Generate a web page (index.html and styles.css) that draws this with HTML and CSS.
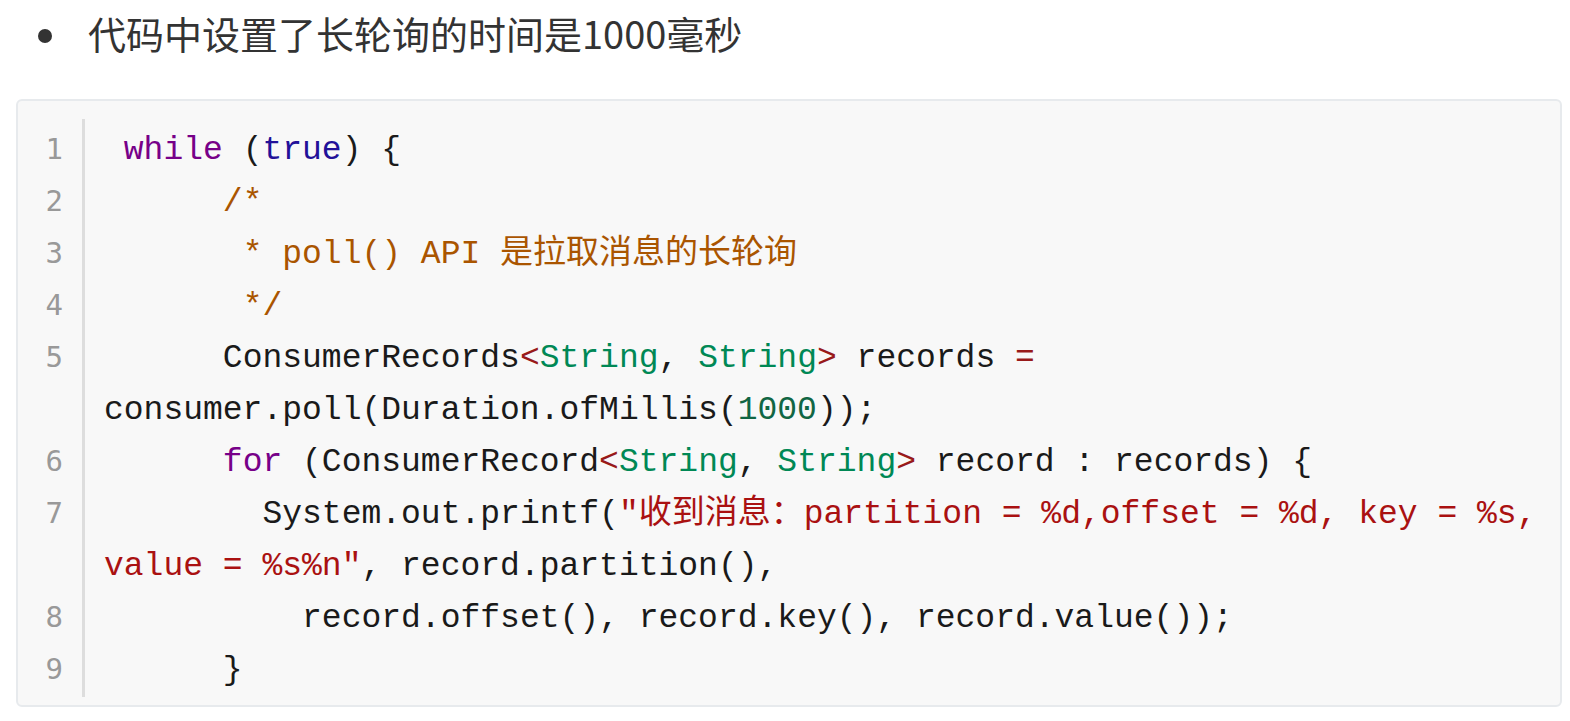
FILE: index.html
```html
<!DOCTYPE html>
<html lang="zh-CN">
<head>
<meta charset="utf-8">
<title>长轮询</title>
<link rel="stylesheet" href="styles.css">
</head>
<body>
<ul class="list">
  <li class="item">代码中设置了长轮询的时间是1000毫秒</li>
</ul>
<div class="code">
  <div class="rows">
    <div class="row"><span class="ln">1</span><span class="src"> <span class="kw">while</span> (<span class="atom">true</span>) {</span></div>
    <div class="row"><span class="ln">2</span><span class="src">      <span class="cm">/*</span></span></div>
    <div class="row"><span class="ln">3</span><span class="src">       <span class="cm">* poll() API 是拉取消息的长轮询</span></span></div>
    <div class="row"><span class="ln">4</span><span class="src">       <span class="cm">*/</span></span></div>
    <div class="row"><span class="ln">5</span><span class="src">      ConsumerRecords<span class="op">&lt;</span><span class="ty">String</span>, <span class="ty">String</span><span class="op">&gt;</span> records <span class="op">=</span> consumer.poll(Duration.ofMillis(<span class="num">1000</span>));</span></div>
    <div class="row"><span class="ln">6</span><span class="src">      <span class="kw">for</span> (ConsumerRecord<span class="op">&lt;</span><span class="ty">String</span>, <span class="ty">String</span><span class="op">&gt;</span> record : records) {</span></div>
    <div class="row"><span class="ln">7</span><span class="src">        System.out.printf(<span class="str">"收到消息：partition = %d,offset = %d, key = %s, value = %s%n"</span>, record.partition(),</span></div>
    <div class="row"><span class="ln">8</span><span class="src">          record.offset(), record.key(), record.value());</span></div>
    <div class="row"><span class="ln">9</span><span class="src">      }</span></div>
  </div>
</div>
</body>
</html>
```

FILE: styles.css
```css
html, body {
  margin: 0;
  padding: 0;
  background: #ffffff;
}

body {
  width: 1570px;
  color: #333333;
}

.list {
  list-style: none;
  margin: 0 0 33px;
  padding: 0;
}

.item {
  display: flex;
  align-items: center;
  height: 66px;
  padding-left: 88px;
  position: relative;
  font-family: "Noto Sans CJK SC", "Open Sans", sans-serif;
  font-size: 38px;
  line-height: 66px;
  color: #333333;
}

.item::before {
  content: "";
  position: absolute;
  left: 38px;
  top: 29px;
  width: 14px;
  height: 14px;
  border-radius: 50%;
  background: #333333;
}

.code {
  margin: 1px 8px 0 16px;
  border: 2px solid #e7eaed;
  border-radius: 6px;
  background: #f8f8f8;
  padding: 18px 0 8px;
}

.rows {
  padding-top: 6px;
  background: linear-gradient(#dddddd, #dddddd) 64px 0 / 3px 100% no-repeat;
}

.row {
  display: flex;
  align-items: flex-start;
}

.ln {
  flex: 0 0 64px;
  box-sizing: border-box;
  height: 52px;
  padding-right: 19px;
  text-align: right;
  font-family: "DejaVu Sans Mono", monospace;
  font-size: 29px;
  line-height: 48px;
  color: #999999;
}

.src {
  flex: 1 1 auto;
  min-width: 0;
  padding: 0 10px 0 22px;
  white-space: pre-wrap;
  font-family: "Liberation Mono", "Noto Sans CJK SC", monospace;
  font-size: 33px;
  line-height: 52px;
  color: #1a1a1a;
}

.kw { color: #770088; }
.atom { color: #221199; }
.cm { color: #aa5500; }
.ty { color: #008855; }
.op { color: #981a1a; }
.num { color: #116644; }
.str { color: #aa1111; }
```
